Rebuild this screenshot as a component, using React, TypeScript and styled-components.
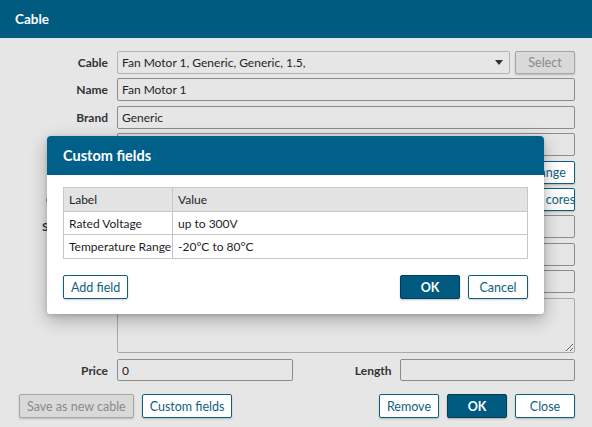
import React from "react";
import styled, { createGlobalStyle, css } from "styled-components";

const GlobalStyle = createGlobalStyle`
  html, body {
    margin: 0;
    padding: 0;
    background: #e6e6e6;
  }
  body {
    font-family: Lato, "Noto Sans", sans-serif;
    font-size: 12px;
    color: #1e1e1e;
  }
  * {
    box-sizing: border-box;
  }
`;

const BLUE = "#015a7f";

const Window = styled.div`
  position: relative;
  width: 592px;
  height: 427px;
  background: #e6e6e6;
  overflow: hidden;
`;

const TitleBar = styled.div`
  height: 38px;
  background: ${BLUE};
  color: #fff;
  font-weight: 700;
  font-size: 13.5px;
  display: flex;
  align-items: center;
  padding-left: 15px;
`;

const Form = styled.div<{ $top: number; $rowH?: number }>`
  display: grid;
  grid-template-columns: 91px 1fr;
  grid-auto-rows: ${({ $rowH = 23 }) => $rowH}px;
  column-gap: 9px;
  row-gap: 4.4px;
  padding: ${({ $top }) => $top}px 17px 0 17px;
`;

const Label = styled.label<{ $top?: boolean }>`
  text-align: right;
  align-self: ${({ $top }) => ($top ? "start" : "center")};
  padding-top: ${({ $top }) => ($top ? "4px" : "0")};
  font-weight: 700;
  color: #333;
  white-space: nowrap;
`;

const fieldBase = css`
  height: 23px;
  border: 1px solid #8c8c8c;
  border-radius: 2px;
  background: #e6e6e6;
  font: inherit;
  color: #1e1e1e;
  padding: 0 4px;
  outline: none;
  min-width: 0;
`;

const Input = styled.input`
  ${fieldBase};
  width: 100%;
`;

const TextArea = styled.textarea`
  ${fieldBase};
  height: 55px;
  width: 100%;
  resize: both;
  border-color: #a9a9a9;
`;

const RowWithButton = styled.div`
  display: flex;
  gap: 5px;
`;

const Combo = styled.div`
  ${fieldBase};
  flex: 1;
  display: flex;
  align-items: center;
  justify-content: space-between;
  border-color: #b4b4b4;
  padding-right: 6px;
`;

const Caret = styled.span`
  width: 0;
  height: 0;
  border-left: 4px solid transparent;
  border-right: 4px solid transparent;
  border-top: 5px solid #333;
`;

const Button = styled.button<{ $variant?: "primary" | "outline" | "disabled" }>`
  height: 23px;
  min-width: 60px;
  padding: 0 7px;
  border-radius: 2px;
  font: inherit;
  font-size: 12.5px;
  cursor: pointer;
  white-space: nowrap;
  ${({ $variant = "outline" }) =>
    $variant === "primary"
      ? css`
          background: ${BLUE};
          border: 1px solid #003f5a;
          color: #fff;
          font-weight: 700;
          box-shadow: 0 1px 2px rgba(0, 0, 0, 0.25);
        `
      : $variant === "disabled"
      ? css`
          background: #d9d9d9;
          border: 1px solid #a6a6a6;
          color: #8a8a8a;
          box-shadow: 0 1px 2px rgba(0, 0, 0, 0.2);
        `
      : css`
          background: #fff;
          border: 1px solid #0f5f80;
          color: #0f5f80;
          box-shadow: 0 1px 2px rgba(0, 0, 0, 0.2);
        `}
`;

const TwoColumn = styled.div`
  display: grid;
  grid-template-columns: 1fr 91px 1fr;
  column-gap: 8px;
  height: 22px;
  & > input {
    height: 22px;
  }
`;

const Footer = styled.div`
  display: flex;
  align-items: center;
  gap: 8px;
  padding: 12px 17px 0 19px;
  & > button {
    height: 24px;
  }
`;

const Spacer = styled.div`
  flex: 1;
`;

const Overlay = styled.div`
  position: absolute;
  left: 47px;
  top: 136px;
  width: 497px;
  background: #fff;
  border-radius: 4px 4px 3px 3px;
  box-shadow: 0 6px 18px rgba(0, 0, 0, 0.28), 0 1px 4px rgba(0, 0, 0, 0.15);
  overflow: hidden;
`;

const DialogHeader = styled.div`
  height: 39px;
  background: #00608a;
  color: #fff;
  font-weight: 700;
  font-size: 14.5px;
  display: flex;
  align-items: center;
  padding-left: 16px;
`;

const DialogBody = styled.div`
  padding: 12px 16px 15px 16px;
`;

const Table = styled.div`
  border: 1px solid #c6c6c6;
  display: grid;
  grid-template-columns: 109px 1fr;
`;

const Cell = styled.div<{ $head?: boolean }>`
  height: ${({ $head }) => ($head ? "24px" : "23px")};
  background: ${({ $head }) => ($head ? "#e3e3e3" : "#fff")};
  border-bottom: 1px solid #c6c6c6;
  display: flex;
  align-items: center;
  padding: 0 5px;
  white-space: nowrap;
  overflow: hidden;
  &:nth-child(odd) {
    border-right: 1px solid #c6c6c6;
  }
  &:nth-last-child(-n + 2) {
    border-bottom: none;
  }
`;

const DialogActions = styled.div`
  display: flex;
  gap: 8px;
  margin-top: 16px;
  & > button {
    height: 24px;
  }
`;

const fields = [
  { label: "Rated Voltage", value: "up to 300V" },
  { label: "Temperature Range", value: "-20°C to 80°C" },
];

export default function App() {
  return (
    <Window>
      <GlobalStyle />
      <TitleBar>Cable</TitleBar>
      <Form $top={13}>
        <Label>Cable</Label>
        <RowWithButton>
          <Combo>
            <span>Fan Motor 1, Generic, Generic, 1.5,</span>
            <Caret />
          </Combo>
          <Button $variant="disabled">Select</Button>
        </RowWithButton>
        <Label>Name</Label>
        <Input defaultValue="Fan Motor 1" />
        <Label>Brand</Label>
        <Input defaultValue="Generic" />
        <Label>Model</Label>
        <Input defaultValue="" />
        <Label>Type</Label>
        <RowWithButton>
          <Input defaultValue="" />
          <Button>Change</Button>
        </RowWithButton>
        <Label>Conductors</Label>
        <RowWithButton>
          <Input defaultValue="" />
          <Button>Edit cores</Button>
        </RowWithButton>
        <Label>Section area</Label>
        <Input defaultValue="" />
        <Label>Color</Label>
        <Input defaultValue="" />
        <Label>Code</Label>
        <Input defaultValue="" />
      </Form>
      <Form $top={5} $rowH={55}>
        <Label $top>Notes</Label>
        <TextArea />
      </Form>
      <Form $top={6}>
        <Label>Price</Label>
        <TwoColumn>
          <Input defaultValue="0" />
          <Label>Length</Label>
          <Input defaultValue="" />
        </TwoColumn>
      </Form>
      <Footer>
        <Button $variant="disabled">Save as new cable</Button>
        <Button>Custom fields</Button>
        <Spacer />
        <Button>Remove</Button>
        <Button $variant="primary">OK</Button>
        <Button>Close</Button>
      </Footer>

      <Overlay>
        <DialogHeader>Custom fields</DialogHeader>
        <DialogBody>
          <Table>
            <Cell $head>Label</Cell>
            <Cell $head>Value</Cell>
            {fields.map((f) => (
              <React.Fragment key={f.label}>
                <Cell>{f.label}</Cell>
                <Cell>{f.value}</Cell>
              </React.Fragment>
            ))}
          </Table>
          <DialogActions>
            <Button>Add field</Button>
            <Spacer />
            <Button $variant="primary">OK</Button>
            <Button>Cancel</Button>
          </DialogActions>
        </DialogBody>
      </Overlay>
    </Window>
  );
}
